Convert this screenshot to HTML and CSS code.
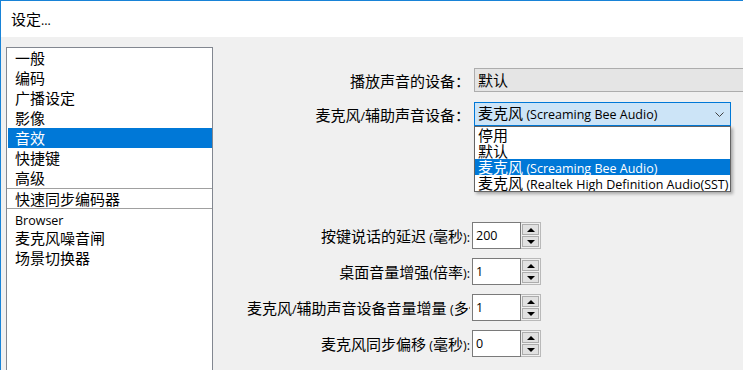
FILE: index.html
```html
<!DOCTYPE html>
<html lang="zh-CN">
<head>
<meta charset="utf-8">
<title>设定...</title>
<link rel="stylesheet" href="styles.css">
</head>
<body>
<div class="window">
  <div class="titlebar">设定<span class="lat">...</span></div>
  <div class="main">
    <ul class="nav">
      <li class="item">一般</li>
      <li class="item">编码</li>
      <li class="item">广播设定</li>
      <li class="item">影像</li>
      <li class="item sel">音效</li>
      <li class="item">快捷键</li>
      <li class="item">高级</li>
      <li class="sep"></li>
      <li class="item short">快速同步编码器</li>
      <li class="sep"></li>
      <li class="item short"><span class="lat">Browser</span></li>
      <li class="item">麦克风噪音闸</li>
      <li class="item">场景切换器</li>
    </ul>
    <div class="panel">
      <div class="form top">
        <div class="label">播放声音的设备：</div>
        <div class="combo ro">默认</div>
        <div class="label">麦克风<span class="lat">/</span>辅助声音设备：</div>
        <div class="combo-wrap">
          <div class="combo focus">
            <span class="combo-text">麦克风 <span class="lat">(Screaming Bee Audio)</span></span>
            <svg class="chev" width="9" height="5" viewBox="0 0 9 5"><polyline points="0.5,0.5 4.5,4.5 8.5,0.5" fill="none" stroke="#404040" stroke-width="1"/></svg>
          </div>
          <ul class="popup">
            <li class="opt">停用</li>
            <li class="opt">默认</li>
            <li class="opt cur">麦克风 <span class="lat">(Screaming Bee Audio)</span></li>
            <li class="opt">麦克风 <span class="lat">(Realtek High Definition Audio(SST)</span></li>
          </ul>
        </div>
      </div>
      <div class="form spins">
        <div class="label">按键说话的延迟 <span class="lat">(</span>毫秒<span class="lat">):</span></div>
        <div class="spin"><div class="spin-val"><span class="lat">200</span></div><div class="spin-btns"><div class="sbtn"><svg width="8" height="4" viewBox="0 0 8 4"><polygon points="0,4 8,4 4,0" fill="#000"/></svg></div><div class="sbtn"><svg width="8" height="4" viewBox="0 0 8 4"><polygon points="0,0 8,0 4,4" fill="#000"/></svg></div></div></div>
        <div class="label">桌面音量增强<span class="lat">(</span>倍率<span class="lat">):</span></div>
        <div class="spin"><div class="spin-val"><span class="lat">1</span></div><div class="spin-btns"><div class="sbtn"><svg width="8" height="4" viewBox="0 0 8 4"><polygon points="0,4 8,4 4,0" fill="#000"/></svg></div><div class="sbtn"><svg width="8" height="4" viewBox="0 0 8 4"><polygon points="0,0 8,0 4,4" fill="#000"/></svg></div></div></div>
        <div class="label">麦克风<span class="lat">/</span>辅助声音设备音量增量 <span class="lat">(</span>多倍率<span class="lat">):</span></div>
        <div class="spin"><div class="spin-val"><span class="lat">1</span></div><div class="spin-btns"><div class="sbtn"><svg width="8" height="4" viewBox="0 0 8 4"><polygon points="0,4 8,4 4,0" fill="#000"/></svg></div><div class="sbtn"><svg width="8" height="4" viewBox="0 0 8 4"><polygon points="0,0 8,0 4,4" fill="#000"/></svg></div></div></div>
        <div class="label">麦克风同步偏移 <span class="lat">(</span>毫秒<span class="lat">):</span></div>
        <div class="spin"><div class="spin-val"><span class="lat">0</span></div><div class="spin-btns"><div class="sbtn"><svg width="8" height="4" viewBox="0 0 8 4"><polygon points="0,4 8,4 4,0" fill="#000"/></svg></div><div class="sbtn"><svg width="8" height="4" viewBox="0 0 8 4"><polygon points="0,0 8,0 4,4" fill="#000"/></svg></div></div></div>
      </div>
    </div>
  </div>
</div>
</body>
</html>
```

FILE: styles.css
```css
html, body {
  margin: 0;
  padding: 0;
  width: 743px;
  height: 370px;
  overflow: hidden;
  background: #f0f0f0;
}
body {
  font-family: "Noto Sans CJK SC", "Noto Sans", sans-serif;
  font-size: 15px;
  color: #000;
}
.lat {
  font-family: "Open Sans", "Liberation Sans", sans-serif;
  font-size: 12.5px;
}
.window {
  height: 369px;
  border-top: 1px solid #1883d7;
  border-left: 1px solid #1883d7;
  display: flex;
  flex-direction: column;
}
.titlebar {
  height: 36px;
  line-height: 36px;
  padding-left: 10px;
  background: #fff;
  flex: none;
}
.main {
  flex: 1;
  display: flex;
  padding: 10px 0 0 5px;
  overflow: hidden;
}
.nav {
  list-style: none;
  margin: 0;
  padding: 0 0 0 1px;
  width: 207px;
  height: 340px;
  box-sizing: border-box;
  border: 1px solid #828790;
  background: #fff;
  flex: none;
}
.item {
  height: 20px;
  line-height: 20px;
  padding-left: 7px;
  white-space: nowrap;
}
.item.short {
  height: 19px;
  line-height: 19px;
}
.item.sel {
  background: #0078d7;
  color: #fff;
}
.sep {
  height: 1px;
  background: #a0a0a0;
  margin-left: -1px;
}
.panel {
  flex: 1;
  padding-top: 21px;
  min-width: 0;
}
.form {
  display: grid;
  grid-template-columns: 223px auto;
  align-items: center;
  margin-left: 34px;
}
.form.top {
  column-gap: 4px;
  row-gap: 10px;
  grid-auto-rows: 24px;
}
.form.spins {
  margin-top: 96px;
  column-gap: 2px;
  row-gap: 9px;
  grid-auto-rows: 27px;
}
.label {
  text-align: right;
  white-space: nowrap;
  overflow: hidden;
}
.combo {
  height: 24px;
  box-sizing: border-box;
  line-height: 22px;
  padding-left: 3px;
  white-space: nowrap;
}
.combo.ro {
  width: 300px;
  border: 1px solid #adadad;
  background: #e5e5e5;
}
.combo-wrap {
  position: relative;
  width: 257px;
  height: 24px;
}
.combo.focus {
  width: 257px;
  border: 1px solid #0078d7;
  background: #cce4f7;
  display: flex;
  align-items: center;
  justify-content: space-between;
  padding-right: 6px;
}
.chev {
  display: block;
}
.popup {
  position: absolute;
  left: 0;
  top: 24px;
  width: 257px;
  box-sizing: border-box;
  margin: 0;
  padding: 0;
  list-style: none;
  border: 1px solid #646464;
  background: #fff;
  box-shadow: 2px 2px 3px rgba(0, 0, 0, 0.3);
  z-index: 5;
}
.opt {
  height: 16px;
  line-height: 16px;
  padding-left: 3px;
  white-space: nowrap;
  overflow: hidden;
}
.opt.cur {
  background: #0078d7;
  color: #fff;
}
.spin {
  display: flex;
  height: 27px;
  width: 69px;
}
.spin-val {
  width: 49px;
  box-sizing: border-box;
  border: 1px solid #7a7a7a;
  background: #fff;
  padding: 2px 3px 0;
  line-height: 18px;
}
.spin-btns {
  width: 20px;
  box-sizing: border-box;
  border: 1px solid #b9b9b9;
  border-left: none;
  background: #f0f0f0;
  padding: 1px;
  display: flex;
  flex-direction: column;
  gap: 1px;
}
.sbtn {
  flex: 1;
  box-sizing: border-box;
  border: 1px solid #adadad;
  background: #e1e1e1;
  display: flex;
  align-items: center;
  justify-content: center;
}
.sbtn svg {
  display: block;
}
```
